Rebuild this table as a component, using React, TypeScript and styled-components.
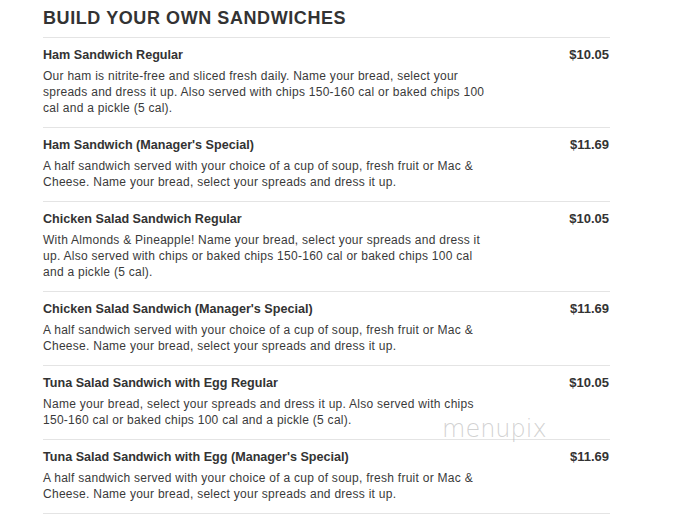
import React from "react";
import styled, { createGlobalStyle } from "styled-components";

const Global = createGlobalStyle`
  html, body { margin: 0; padding: 0; background: #fff; }
  body { font-family: Arial, "Liberation Sans", sans-serif; color: #333; }
`;

const Page = styled.div`
  position: relative;
  width: 675px;
  height: 515px;
  overflow: hidden;
  padding: 7px 0 0 43px;
  box-sizing: border-box;
`;

const Section = styled.div`
  width: 567px;
`;

const Heading = styled.h2`
  margin: 0 0 8px;
  font-size: 18px;
  line-height: 22px;
  font-weight: 700;
  color: #333;
  letter-spacing: 0.58px;
`;

const Item = styled.div`
  display: flex;
  justify-content: space-between;
  align-items: flex-start;
  border-top: 1px solid #e4e4e4;
  padding: 9px 1px 11px 0;
`;

const Info = styled.div`
  width: 446px;
`;

const Title = styled.div`
  font-size: 12.6px;
  line-height: 16px;
  font-weight: 700;
  color: #333;
  white-space: nowrap;
`;

const Desc = styled.div`
  margin-top: 5px;
  font-size: 12px;
  line-height: 16px;
  letter-spacing: 0.27px;
  color: #3a3a3a;
`;

const Price = styled.div`
  font-size: 13px;
  line-height: 16px;
  font-weight: 700;
  color: #333;
`;

const Watermark = styled.div`
  position: absolute;
  left: 442px;
  top: 417px;
  font-family: "DejaVu Sans", sans-serif;
  font-weight: 200;
  font-size: 24px;
  line-height: 24px;
  color: rgba(180, 180, 180, 0.6);
  pointer-events: none;
`;

const items = [
  {
    title: "Ham Sandwich Regular",
    price: "$10.05",
    desc: "Our ham is nitrite-free and sliced fresh daily. Name your bread, select your spreads and dress it up. Also served with chips 150-160 cal or baked chips 100 cal and a pickle (5 cal).",
  },
  {
    title: "Ham Sandwich (Manager's Special)",
    price: "$11.69",
    desc: "A half sandwich served with your choice of a cup of soup, fresh fruit or Mac & Cheese. Name your bread, select your spreads and dress it up.",
  },
  {
    title: "Chicken Salad Sandwich Regular",
    price: "$10.05",
    desc: "With Almonds & Pineapple! Name your bread, select your spreads and dress it up. Also served with chips or baked chips 150-160 cal or baked chips 100 cal and a pickle (5 cal).",
  },
  {
    title: "Chicken Salad Sandwich (Manager's Special)",
    price: "$11.69",
    desc: "A half sandwich served with your choice of a cup of soup, fresh fruit or Mac & Cheese. Name your bread, select your spreads and dress it up.",
  },
  {
    title: "Tuna Salad Sandwich with Egg Regular",
    price: "$10.05",
    desc: "Name your bread, select your spreads and dress it up. Also served with chips 150-160 cal or baked chips 100 cal and a pickle (5 cal).",
  },
  {
    title: "Tuna Salad Sandwich with Egg (Manager's Special)",
    price: "$11.69",
    desc: "A half sandwich served with your choice of a cup of soup, fresh fruit or Mac & Cheese. Name your bread, select your spreads and dress it up.",
  },
];

export default function App() {
  return (
    <>
      <Global />
      <Page>
        <Section>
          <Heading>BUILD YOUR OWN SANDWICHES</Heading>
          {items.map((it, i) => (
            <Item key={i}>
              <Info>
                <Title>{it.title}</Title>
                <Desc>{it.desc}</Desc>
              </Info>
              <Price>{it.price}</Price>
            </Item>
          ))}
          <Item />
        </Section>
        <Watermark>menupix</Watermark>
      </Page>
    </>
  );
}
